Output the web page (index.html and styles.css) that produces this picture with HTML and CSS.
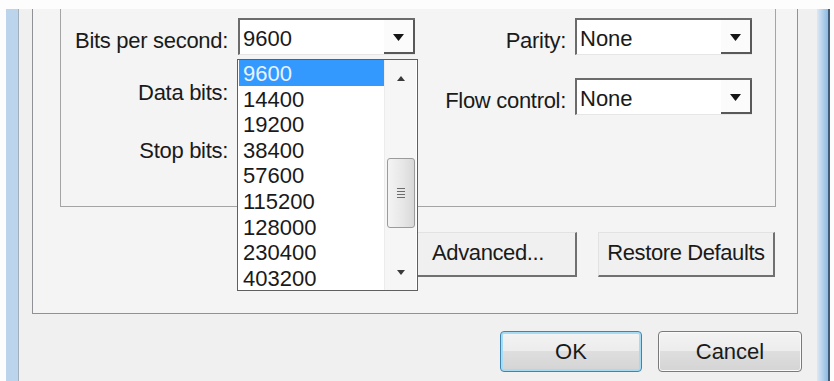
FILE: index.html
```html
<!DOCTYPE html>
<html lang="en">
<head>
    <meta charset="UTF-8">
    <meta name="viewport" content="width=device-width, initial-scale=1.0">
    <title>Port Settings</title>
    <link rel="stylesheet" href="styles.css">
</head>
<body>
    <div class="window">
        <div class="client">
            <div class="tab-page">
                <div class="group">
                    <div class="col col-left">
                        <div class="field">
                            <label class="field-label">Bits per second:</label>
                            <div class="combo">
                                <span class="combo-value">9600</span>
                                <span class="combo-btn">
                                    <svg width="11" height="7" viewBox="0 0 11 7"><polygon points="0,0 11,0 5.5,7" fill="#151515"/></svg>
                                </span>
                                <!-- open list of the first combo -->
                                <div class="dropdown">
                                    <ul class="options">
                                        <li class="selected">9600</li>
                                        <li>14400</li>
                                        <li>19200</li>
                                        <li>38400</li>
                                        <li>57600</li>
                                        <li>115200</li>
                                        <li>128000</li>
                                        <li>230400</li>
                                        <li>403200</li>
                                    </ul>
                                    <div class="scrollbar">
                                        <div class="sb-btn">
                                            <svg width="8" height="5" viewBox="0 0 8 5"><polygon points="0,5 8,5 4,0" fill="#3a3a3a"/></svg>
                                        </div>
                                        <div class="sb-track">
                                            <div class="sb-thumb">
                                                <span></span><span></span><span></span><span></span>
                                            </div>
                                        </div>
                                        <div class="sb-btn">
                                            <svg width="8" height="5" viewBox="0 0 8 5"><polygon points="0,0 8,0 4,5" fill="#3a3a3a"/></svg>
                                        </div>
                                    </div>
                                </div>
                            </div>
                        </div>
                        <div class="field field-data">
                            <label class="field-label">Data bits:</label>
                        </div>
                        <div class="field field-stop">
                            <label class="field-label">Stop bits:</label>
                        </div>
                    </div>
                    <div class="col col-right">
                        <div class="field">
                            <label class="field-label">Parity:</label>
                            <div class="combo">
                                <span class="combo-value">None</span>
                                <span class="combo-btn">
                                    <svg width="11" height="7" viewBox="0 0 11 7"><polygon points="0,0 11,0 5.5,7" fill="#151515"/></svg>
                                </span>
                            </div>
                        </div>
                        <div class="field field-flow">
                            <label class="field-label">Flow control:</label>
                            <div class="combo">
                                <span class="combo-value">None</span>
                                <span class="combo-btn">
                                    <svg width="11" height="7" viewBox="0 0 11 7"><polygon points="0,0 11,0 5.5,7" fill="#151515"/></svg>
                                </span>
                            </div>
                        </div>
                    </div>
                </div>
                <div class="btn-row">
                    <button class="btn-classic">Advanced...</button>
                    <button class="btn-classic">Restore Defaults</button>
                </div>
            </div>
            <div class="dialog-buttons">
                <button class="btn-aero btn-default">OK</button>
                <button class="btn-aero btn-cancel">Cancel</button>
            </div>
        </div>
    </div>
</body>
</html>
```

FILE: styles.css
```css
body {
    margin: 0;
    padding: 0;
    width: 834px;
    height: 381px;
    overflow: hidden;
    background-color: #fdfdfd;
    font-family: "Liberation Sans", Arial, sans-serif;
    font-size: 22px;
    color: #1a1a1a;
}
.window {
    display: flex;
    width: 824px;
    height: 380px;
    margin: 9px 0 0 6px;
    box-sizing: border-box;
    padding: 0 11px 0 12px;
    border-right: 2px solid #3f5d78;
    background: linear-gradient(to right, #bcd4ec 0, #bcd4ec 12px, #dce9f5 calc(100% - 11px), #8ebae2 100%);
}
.client {
    width: 799px;
    padding-left: 14px;
    box-sizing: border-box;
    background-color: #f0f0f0;
    box-shadow: inset 1px 0 0 #a3afbb;
}
.tab-page {
    width: 766px;
    height: 305px;
    box-sizing: border-box;
    border: 1px solid #8f9194;
    border-top: none;
    background-color: #f4f4f4;
}
.group {
    display: flex;
    width: 716px;
    height: 198px;
    margin-left: 27px;
    padding-top: 9px;
    box-sizing: border-box;
    border: 1px solid #a4a4a4;
    border-top: none;
}
.col-left {
    width: 354px;
}
.field {
    display: flex;
    align-items: flex-start;
}
.col-left .field {
    gap: 10px;
}
.col-left .field-label {
    width: 167px;
}
.col-right .field {
    gap: 9px;
}
.col-right .field-label {
    width: 151px;
}
.field-label {
    line-height: 37px;
    padding-top: 4px;
    text-align: right;
    white-space: nowrap;
    letter-spacing: -0.3px;
}
.field-data {
    margin-top: 11px;
}
.field-stop {
    margin-top: 17px;
}
.field-flow {
    margin-top: 19px;
}
.combo {
    position: relative;
    display: flex;
    width: 177px;
    height: 37px;
    box-sizing: border-box;
    border-top: 2px solid #6b6b6b;
    border-left: 2px solid #6b6b6b;
    border-bottom: 1px solid #e6e6e6;
    background-color: #fff;
}
.combo-value {
    flex: 1;
    padding: 4px 0 0 3px;
    line-height: 30px;
}
.combo-btn {
    display: flex;
    align-items: center;
    justify-content: center;
    width: 31px;
    padding-top: 3px;
    box-sizing: border-box;
    border-right: 2px solid #585858;
    border-bottom: 2px solid #585858;
    background-color: #fbfbfb;
}

/* open list */
.dropdown {
    position: absolute;
    top: 39px;
    left: -3px;
    z-index: 5;
    display: flex;
    width: 181px;
    height: 232px;
    box-sizing: border-box;
    border: 1px solid #5f5f5f;
    background-color: #fff;
}
.options {
    flex: 1;
    margin: 0;
    padding: 0 0 0 1px;
    list-style: none;
}
.options li {
    height: 25.6px;
    box-sizing: border-box;
    padding: 2px 0 0 4px;
    line-height: 23.6px;
}
.options li.selected {
    background-color: #3399ff;
    color: #e8f4ff;
}
.scrollbar {
    display: flex;
    flex-direction: column;
    width: 31px;
    margin-right: 1px;
    background-color: #f6f6f6;
    border-left: 1px solid #ececec;
}
.sb-btn {
    display: flex;
    align-items: center;
    justify-content: center;
    height: 36px;
}
.sb-track {
    flex: 1;
    padding: 62px 1px 0 2px;
}
.sb-thumb {
    display: flex;
    flex-direction: column;
    align-items: center;
    justify-content: center;
    gap: 2px;
    height: 70px;
    box-sizing: border-box;
    border: 1px solid #9b9b9b;
    border-radius: 3px;
    background: linear-gradient(to right, #f4f4f4, #e6e6e6 60%, #d8d8d8);
}
.sb-thumb span {
    width: 8px;
    height: 1px;
    background-color: #6c6c6c;
}

.btn-row {
    display: flex;
    justify-content: flex-end;
    gap: 21px;
    margin-top: 25px;
    padding-right: 22px;
}
.btn-classic {
    width: 177px;
    height: 45px;
    padding: 0 0 3px;
    border: 1px solid #e2e2e2;
    border-right: 2px solid #707070;
    border-bottom: 2px solid #707070;
    background-color: #f0f0f0;
    font-family: inherit;
    font-size: 22px;
    letter-spacing: -0.4px;
    white-space: nowrap;
    color: #1a1a1a;
}
.dialog-buttons {
    display: flex;
    justify-content: flex-end;
    gap: 16px;
    margin-top: 17px;
    padding-right: 15px;
}
.btn-aero {
    width: 144px;
    height: 41px;
    padding: 0;
    border: 1px solid #7a7a7a;
    border-radius: 4px;
    background: linear-gradient(#f3f3f3 0%, #ececec 50%, #dedede 50%, #d4d4d4 100%);
    box-shadow: inset 0 0 0 1px #fafafa;
    font-family: inherit;
    font-size: 22px;
    color: #1a1a1a;
}
.btn-default {
    width: 142px;
    border-color: #3f84ad;
    box-shadow: inset 0 0 0 2px #a6dcf3;
}
```
